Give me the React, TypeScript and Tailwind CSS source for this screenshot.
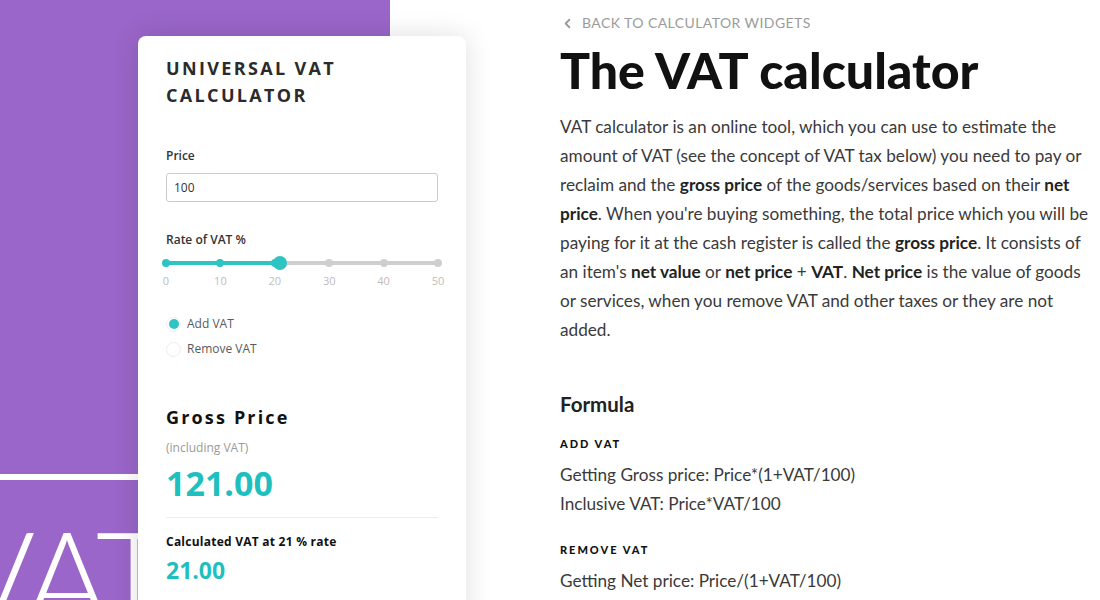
import { ChevronLeft } from "lucide-react";

const ticks = [0, 10, 20, 30, 40, 50];

const VatSlider = ({ value }: { value: number }) => {
  const pct = (value / 50) * 100;
  return (
    <div>
      <div className="relative h-[14px] mt-[8px]">
        <div className="absolute left-0 right-0 top-[5px] h-[4px] rounded-full bg-[#cfcfcf]" />
        <div className="absolute left-0 top-[5px] h-[4px] rounded-full bg-[#2ec4c4]" style={{ width: `${pct}%` }} />
        {ticks.map((t) => (
          <span
            key={t}
            className={`absolute top-[3px] w-[8px] h-[8px] -ml-[4px] rounded-full ${t <= value ? "bg-[#2ec4c4]" : "bg-[#cfcfcf]"}`}
            style={{ left: `${(t / 50) * 100}%` }}
          />
        ))}
        <span className="absolute top-0 w-[14px] h-[14px] -ml-[7px] rounded-full bg-[#2ec4c4]" style={{ left: `${pct}%` }} />
      </div>
      <div className="flex justify-between mt-[4px] text-[11px] leading-[14px] text-[#bdbdbd] -mx-[10px]">
        {ticks.map((t) => (
          <span key={t} className="w-[20px] text-center">
            {t}
          </span>
        ))}
      </div>
    </div>
  );
};

const Calculator = () => {
  return (
    <div className="relative ml-[138px] mt-[36px] w-[328px] h-[600px] bg-white rounded-lg shadow-[0_0_28px_rgba(0,0,0,0.13)] pt-[19px] px-[28px] font-['Open_Sans',sans-serif]">
      <h2 className="text-[18px] leading-[27px] font-bold tracking-[0.13em] text-[#2b2b2b]">
        UNIVERSAL VAT
        <br />
        CALCULATOR
      </h2>

      <label className="block mt-[39px] text-[12px] leading-[16px] font-semibold text-[#333]">Price</label>
      <div className="mt-[9px] h-[29px] border border-[#cccccc] rounded-[3px] px-[7px] flex items-center text-[12px] text-[#333]">
        100
      </div>

      <label className="block mt-[30px] text-[12px] leading-[16px] font-semibold text-[#333]">Rate of VAT %</label>
      <VatSlider value={21} />

      <div className="mt-[28px] flex items-center gap-[6px] text-[12px] leading-[16px] text-[#5a5a5a]">
        <span className="w-[15px] h-[15px] rounded-full border border-[#eeeeee] flex items-center justify-center">
          <span className="w-[10px] h-[10px] rounded-full bg-[#2ec4c4]" />
        </span>
        Add VAT
      </div>
      <div className="mt-[9px] flex items-center gap-[6px] text-[12px] leading-[16px] text-[#5a5a5a]">
        <span className="w-[15px] h-[15px] rounded-full border border-[#eeeeee]" />
        Remove VAT
      </div>

      <h3 className="mt-[48px] text-[18px] leading-[24px] font-bold tracking-[0.12em] text-[#111]">Gross Price</h3>
      <p className="mt-[11px] text-[12px] leading-[16px] text-[#9a9a9a]">(including VAT)</p>
      <p className="mt-[7px] text-[34px] leading-[40px] font-bold text-[#1fbfc0]">121.00</p>

      <div className="mt-[14px] h-px bg-[#ececec]" />

      <p className="mt-[16px] text-[12px] leading-[16px] font-bold text-[#111] tracking-[0.02em]">Calculated VAT at 21 % rate</p>
      <p className="mt-[5px] text-[23px] leading-[30px] font-bold text-[#1fbfc0]">21.00</p>
    </div>
  );
};

const Article = () => {
  return (
    <div className="w-[535px] pt-[13px] font-['Lato',sans-serif] text-[#3a3a3a]">
      <a className="flex items-center gap-[7px] text-[14px] leading-[20px] tracking-[0.03em] text-[#9b9b9b]">
        <ChevronLeft size={15} strokeWidth={3} />
        BACK TO CALCULATOR WIDGETS
      </a>
      <h1 className="mt-[9px] text-[50px] leading-[56px] font-black text-[#111]">The VAT calculator</h1>
      <p className="mt-[14px] text-[17.2px] leading-[29px]">
        VAT calculator is an online tool, which you can use to estimate the amount of VAT (see the concept of VAT tax below) you
        need to pay or reclaim and the <b className="font-bold text-[#222]">gross price</b> of the goods/services based on their{" "}
        <b className="font-bold text-[#222]">net price</b>. When you're buying something, the total price which you will be paying
        for it at the cash register is called the <b className="font-bold text-[#222]">gross price</b>. It consists of an item's{" "}
        <b className="font-bold text-[#222]">net value</b> or <b className="font-bold text-[#222]">net price</b> +{" "}
        <b className="font-bold text-[#222]">VAT</b>. <b className="font-bold text-[#222]">Net price</b> is the value of goods or
        services, when you remove VAT and other taxes or they are not added.
      </p>

      <h2 className="mt-[46px] text-[20.5px] leading-[28px] font-bold text-[#222]">Formula</h2>
      <h4 className="mt-[18px] text-[11px] leading-[16px] font-black tracking-[0.18em] text-[#111]">ADD VAT</h4>
      <p className="mt-[8px] text-[17.2px] leading-[29px]">Getting Gross price: Price*(1+VAT/100)</p>
      <p className="text-[17.2px] leading-[29px]">Inclusive VAT: Price*VAT/100</p>
      <h4 className="mt-[24px] text-[11px] leading-[16px] font-black tracking-[0.18em] text-[#111]">REMOVE VAT</h4>
      <p className="mt-[8px] text-[17.2px] leading-[29px]">Getting Net price: Price/(1+VAT/100)</p>
    </div>
  );
};

export default function App() {
  return (
    <div className="h-[600px] w-[1100px] overflow-hidden bg-white flex">
      <div className="relative w-[560px] shrink-0">
        {/* purple backdrop with the big VAT lettering */}
        <div className="absolute inset-y-0 left-0 w-[390px] bg-[#9a66c9] overflow-hidden">
          <div className="absolute left-0 top-[474px] w-full h-[6px] bg-white" />
          <span className="absolute -left-[51px] top-[510px] font-['Lato',sans-serif] font-light text-[132px] leading-none tracking-[-0.04em] text-white">
            VAT
          </span>
        </div>
        <Calculator />
      </div>
      <Article />
    </div>
  );
}
